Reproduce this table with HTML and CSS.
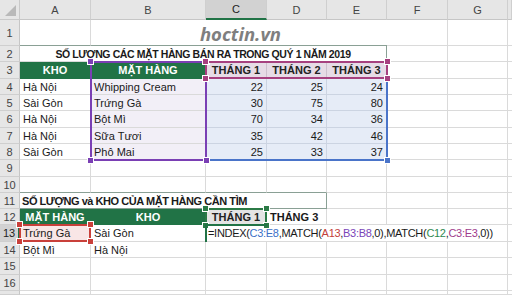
FILE: index.html
```html
<!DOCTYPE html>
<html>
<head>
<meta charset="utf-8">
<link rel="stylesheet" href="styles.css">
</head>
<body>
<div class="sheet">
  <div class="corner"><span class="tri"></span></div>
  <div class="ch">A</div><div class="ch">B</div><div class="ch sel">C</div><div class="ch">D</div><div class="ch">E</div><div class="ch">F</div><div class="ch">G</div><div class="ch"></div>

  <div class="rh">1</div><div class="c bb"></div><div class="c span4 logo bb">hoctin.vn</div><div class="c"></div><div class="c"></div><div class="c"></div>

  <div class="rh">2</div><div class="c span5 title">SỐ LƯỢNG CÁC MẶT HÀNG BÁN RA TRONG QUÝ 1 NĂM 2019</div><div class="c"></div><div class="c"></div><div class="c"></div>

  <div class="rh">3</div><div class="c green">KHO</div><div class="c green">MẶT HÀNG</div><div class="c head pink">THÁNG 1</div><div class="c head pink">THÁNG 2</div><div class="c head pink">THÁNG 3</div><div class="c"></div><div class="c"></div><div class="c"></div>

  <div class="rh">4</div><div class="c">Hà Nội</div><div class="c lav">Whipping Cream</div><div class="c num blue">22</div><div class="c num blue">25</div><div class="c num blue">24</div><div class="c"></div><div class="c"></div><div class="c"></div>
  <div class="rh">5</div><div class="c">Sài Gòn</div><div class="c lav">Trứng Gà</div><div class="c num blue">30</div><div class="c num blue">75</div><div class="c num blue">80</div><div class="c"></div><div class="c"></div><div class="c"></div>
  <div class="rh">6</div><div class="c">Hà Nội</div><div class="c lav">Bột Mì</div><div class="c num blue">70</div><div class="c num blue">34</div><div class="c num blue">36</div><div class="c"></div><div class="c"></div><div class="c"></div>
  <div class="rh">7</div><div class="c">Hà Nội</div><div class="c lav">Sữa Tươi</div><div class="c num blue">35</div><div class="c num blue">42</div><div class="c num blue">46</div><div class="c"></div><div class="c"></div><div class="c"></div>
  <div class="rh">8</div><div class="c">Sài Gòn</div><div class="c lav">Phô Mai</div><div class="c num blue">25</div><div class="c num blue">33</div><div class="c num blue">37</div><div class="c"></div><div class="c"></div><div class="c"></div>

  <div class="rh">9</div><div class="c"></div><div class="c"></div><div class="c"></div><div class="c"></div><div class="c"></div><div class="c"></div><div class="c"></div><div class="c"></div>
  <div class="rh">10</div><div class="c bb"></div><div class="c bb"></div><div class="c bb"></div><div class="c bb"></div><div class="c"></div><div class="c"></div><div class="c"></div><div class="c"></div>

  <div class="rh">11</div><div class="c span4 sub">SỐ LƯỢNG và KHO CỦA MẶT HÀNG CẦN TÌM</div><div class="c"></div><div class="c"></div><div class="c"></div><div class="c"></div>

  <div class="rh">12</div><div class="c green">MẶT HÀNG</div><div class="c green">KHO</div><div class="c head gray">THÁNG 1</div><div class="c bold">THÁNG 3</div><div class="c"></div><div class="c"></div><div class="c"></div><div class="c"></div>

  <div class="rh sel">13</div><div class="c rose">Trứng Gà</div><div class="c">Sài Gòn</div><div class="c span5 formula">=INDEX(<span class="f-blue">C3:E8</span>,MATCH(<span class="f-red">A13</span>,<span class="f-purple">B3:B8</span>,0),MATCH(<span class="f-green">C12</span>,<span class="f-pink">C3:E3</span>,0))</div><div class="c"></div>

  <div class="rh">14</div><div class="c">Bột Mì</div><div class="c">Hà Nội</div><div class="c"></div><div class="c"></div><div class="c"></div><div class="c"></div><div class="c"></div><div class="c"></div>
  <div class="rh">15</div><div class="c"></div><div class="c"></div><div class="c"></div><div class="c"></div><div class="c"></div><div class="c"></div><div class="c"></div><div class="c"></div>
  <div class="rh">16</div><div class="c"></div><div class="c"></div><div class="c"></div><div class="c"></div><div class="c"></div><div class="c"></div><div class="c"></div><div class="c"></div>
  <div class="rh"></div><div class="c"></div><div class="c"></div><div class="c"></div><div class="c"></div><div class="c"></div><div class="c"></div><div class="c"></div><div class="c"></div>

  <div class="hl hl-blue"><i class="k br"></i></div>
  <div class="hl hl-purple"><i class="k tl"></i><i class="k tr"></i><i class="k bl"></i><i class="k br"></i></div>
  <div class="hl hl-pink"><i class="k tl"></i><i class="k tr"></i><i class="k bl"></i><i class="k br"></i></div>
  <div class="hl hl-red"><i class="k tl"></i><i class="k tr"></i><i class="k bl"></i><i class="k br"></i></div>
  <div class="hl hl-green"><i class="k tl"></i><i class="k tr"></i><i class="k bl"></i><i class="k br"></i></div>
  <div class="hl hl-active"></div>
</div>
</body>
</html>
```

FILE: styles.css
```css
* { box-sizing: border-box; }
html, body { margin: 0; padding: 0; background: #fff; }
body { width: 512px; height: 295px; overflow: hidden; }

.sheet {
  position: relative;
  display: grid;
  grid-template-columns: 20px 71px 115px 61px 60px 60px 61px 60px 4px;
  grid-template-rows: 20px 26px 16px 17px 16px 16px 17px 16px 16px 17px 16px 16px 16px 17px 16px 17px 16px 4px;
  width: 512px;
  height: 295px;
  overflow: hidden;
  font-family: "Liberation Sans", Arial, sans-serif;
  font-size: 11px;
  color: #1a1a1a;
}

.corner {
  position: relative;
  background: #e6e6e6;
  border-right: 1px solid #c9c9c9;
  border-bottom: 1px solid #c9c9c9;
}
.tri {
  position: absolute;
  right: 3px;
  bottom: 3px;
  width: 0;
  height: 0;
  border-left: 11px solid transparent;
  border-bottom: 11px solid #b9b9b9;
}

.ch {
  background: #e6e6e6;
  border-right: 1px solid #cfcfcf;
  border-bottom: 1px solid #c6c6c6;
  display: flex;
  align-items: center;
  justify-content: center;
  color: #444;
  font-size: 11px;
}
.ch.sel {
  background: #d2d2d2;
  border-bottom: 2px solid #217346;
  color: #222;
}

.rh {
  background: #e6e6e6;
  border-right: 1px solid #c6c6c6;
  border-bottom: 1px solid #cfcfcf;
  display: flex;
  align-items: center;
  justify-content: center;
  color: #444;
  font-size: 11px;
}
.rh.sel {
  background: #d2d2d2;
  border-right: 2px solid #217346;
  color: #222;
}

.c {
  border-right: 1px solid #dadada;
  border-bottom: 1px solid #dadada;
  padding: 0 3px;
  display: flex;
  align-items: center;
  white-space: nowrap;
  overflow: hidden;
  background: #fff;
}

.span5 { grid-column: span 5; }
.span4 { grid-column: span 4; }
.bb { border-bottom-color: #8aa095; }

.logo {
  justify-content: center;
  padding-top: 2px;
  padding-left: 6px;
  font-family: "Open Sans", sans-serif;
  font-weight: bold;
  font-style: italic;
  font-size: 18.5px;
  color: #7f7f7f;
  border-right: none;
}

.title {
  justify-content: center;
  font-weight: bold;
  font-size: 10.5px;
  border-right: 1px solid #8aa095;
  letter-spacing: -0.4px;
}

.sub {
  font-weight: bold;
  border-right: 1px solid #8aa095;
  border-bottom: 1px solid #8aa095;
  letter-spacing: -0.45px;
  padding-left: 2px;
}

.green {
  background: #217346;
  color: #fff;
  font-weight: bold;
  justify-content: center;
  border-right-color: #217346;
  border-bottom-color: #217346;
}

.head {
  font-weight: bold;
  justify-content: center;
  color: #222;
}
.pink { background: #e6dbe6; border-right-color: #cdbfcd; }
.gray { background: #e4e4e4; }
.bold { font-weight: bold; }

.num { justify-content: flex-end; }
.blue { background: #e6ecf7; border-right-color: #ccd4e2; border-bottom-color: #ccd4e2; }
.lav { background: #f2eff7; }
.rose { background: #f9e6e6; }

.formula {
  background: #fff;
  color: #1a1a1a;
  padding-left: 2px;
  letter-spacing: -0.3px;
}
.f-blue { color: #3b6fc6; }
.f-red { color: #c4403a; }
.f-purple { color: #7a44b8; }
.f-green { color: #2f8a4f; }
.f-pink { color: #a03c8c; }

.hl {
  position: absolute;
  border: 2px solid currentColor;
}
.hl-blue { color: #4a74c9; left: 205px; top: 61px; width: 183px; height: 100px; }
.hl-purple { color: #7a3fb4; left: 90px; top: 61px; width: 117px; height: 100px; }
.hl-pink { color: #a6407f; left: 205px; top: 61px; width: 183px; height: 18px; }
.hl-red { color: #c9403a; left: 19px; top: 224px; width: 72px; height: 18px; }
.hl-green { color: #2b7a46; left: 205px; top: 208px; width: 62px; height: 18px; }
.hl-active { color: #217346; left: 205px; top: 224px; width: 62px; height: 18px; border-right: none; border-bottom: none; }

.k {
  position: absolute;
  width: 5px;
  height: 5px;
  background: currentColor;
  border: 1px solid #fff;
  box-sizing: content-box;
}
.k.tl { left: -5px; top: -5px; }
.k.tr { right: -5px; top: -5px; }
.k.bl { left: -5px; bottom: -5px; }
.k.br { right: -5px; bottom: -5px; }
```
